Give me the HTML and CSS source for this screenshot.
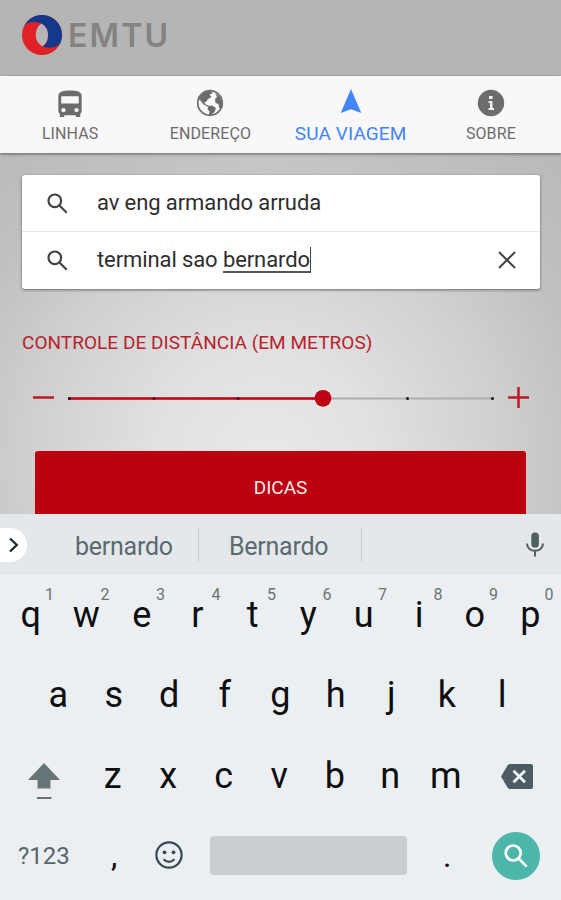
FILE: index.html
```html
<!DOCTYPE html>
<html lang="pt-BR">
<head>
  <meta charset="UTF-8">
  <meta name="viewport" content="width=device-width, initial-scale=1.0">
  <title>EMTU - Sua Viagem</title>
  <link rel="stylesheet" href="styles.css">
</head>
<body>
  <header class="header">
    <svg class="logo" viewBox="0 0 40 40">
      <circle cx="20" cy="20" r="20" fill="#e02127"/>
      <path d="M2.500 10.300A20 20 0 0 1 38 28.700C34 32.500 27 34 20.500 31.500C25.500 28.500 26 24 26 20C26 15 24 11.500 19.500 8.500C12 5.500 6 7 2.500 10.300Z" fill="#15388b"/>
      <path d="M19.500 8.500C24 11.500 26 15 26 20C26 25 24 29 20.500 31.500C16 28.500 13.800 25 13.800 20C13.800 15 15.500 11.500 19.500 8.500Z" fill="#b6b6b6"/>
    </svg>
    <span class="brand">EMTU</span>
  </header>

  <nav class="tabs">
    <a class="tab">
      <svg viewBox="0 0 24 24"><path d="M4 16c0 .88.39 1.670 1 2.220V20c0 .55.450 1 1 1h1c.55 0 1-.45 1-1v-1h8v1c0 .55.450 1 1 1h1c.55 0 1-.45 1-1v-1.780c.61-.55 1-1.340 1-2.220V6c0-3.500-3.580-4-8-4s-8 .5-8 4v10zm3.500 1c-.83 0-1.500-.67-1.500-1.500S6.670 14 7.500 14s1.500.67 1.500 1.500S8.330 17 7.500 17zm9 0c-.83 0-1.500-.67-1.500-1.500s.67-1.500 1.500-1.500 1.500.67 1.500 1.500-.67 1.500-1.500 1.500zm1.500-6H6V6h12v5z" transform="translate(-3 -1.300) scale(1.250)"/></svg>
      <span>LINHAS</span>
    </a>
    <a class="tab">
      <svg viewBox="0 0 28 28">
        <circle cx="14" cy="14" r="12.300" fill="none" stroke="currentColor" stroke-width="1.700"/>
        <path d="M4 7L8 3.500L14 2L17 4L13.500 5.500L15.500 8L12 10L10 13L8 13.500L10.500 16L13 16.500L12 18L7 15L4.500 11.500L3 11Z"/>
        <path d="M12.500 17L16 16.500L20 19L18.500 23L15 26H13L13.500 22.500L11.500 20Z"/>
        <path d="M19 4L24 8L26.500 14L25 20L23 18.500L22.500 15L19.500 14L19 10L21 8Z"/>
      </svg>
      <span>ENDEREÇO</span>
    </a>
    <a class="tab active">
      <svg viewBox="0 0 28 28"><path d="M14 0L24.300 24L14 20.200L3.700 24Z"/></svg>
      <span>SUA VIAGEM</span>
    </a>
    <a class="tab">
      <svg viewBox="0 0 28 28"><circle cx="14" cy="14" r="13.200"/><path d="M12 7h3.500v3H12zM11.500 12H15.500V19H17V21H11.500V19H13V14H11.500Z" fill="#f2f2f2"/></svg>
      <span>SOBRE</span>
    </a>
  </nav>

  <main class="content">
    <div class="search-card">
      <div class="search-row">
        <svg class="search-icon" viewBox="0 0 21 21"><circle cx="7.800" cy="7.800" r="6.300"/><path d="M12.500 12.500L19.700 19.700"/></svg>
        <span class="query">av eng armando arruda</span>
      </div>
      <div class="search-row">
        <svg class="search-icon" viewBox="0 0 21 21"><circle cx="7.800" cy="7.800" r="6.300"/><path d="M12.500 12.500L19.700 19.700"/></svg>
        <span class="query">terminal sao <span class="composing">bernardo</span></span>
        <span class="caret"></span>
        <svg class="clear-icon" viewBox="0 0 18 18"><path d="M1 1L17 17M17 1L1 17"/></svg>
      </div>
    </div>

    <h2 class="distance-title">CONTROLE DE DISTÂNCIA (EM METROS)</h2>

    <div class="slider">
      <svg class="step-icon" viewBox="0 0 21 21"><path d="M0 10.500H21"/></svg>
      <svg class="track" viewBox="0 0 426 18">
        <path d="M0 9.500H426" stroke="#adadad" stroke-width="2"/>
        <path d="M0 9.500H254" stroke="#bd0012" stroke-width="2.600"/>
        <g fill="#181818">
          <circle cx="1.500" cy="9.500" r="1.500"/>
          <circle cx="86" cy="9.500" r="1.300"/>
          <circle cx="170" cy="9.500" r="1.300"/>
          <circle cx="339.500" cy="9.500" r="1.500"/>
          <circle cx="424.500" cy="9.500" r="1.500"/>
        </g>
        <circle cx="255" cy="9.300" r="8.400" fill="#bd0012"/>
      </svg>
      <svg class="step-icon" viewBox="0 0 21 21"><path d="M0 10.500H21M10.500 0V21"/></svg>
    </div>

    <button class="tips" type="button">DICAS</button>
  </main>

  <section class="keyboard">
    <div class="suggestions">
      <span class="expand"><svg viewBox="0 0 10 16"><path d="M1 1.500L7.800 8L1 14.500"/></svg></span>
      <span class="word first">bernardo</span>
      <span class="word second">Bernardo</span>
      <svg class="mic" viewBox="0 0 18 25"><rect x="5.300" y="0.500" width="7.600" height="15" rx="3.600" fill="#506163"/><path d="M1 11.500C1 21.300 17 21.300 17 11.500M9 19V24.500" fill="none" stroke="#506163" stroke-width="2"/></svg>
    </div>

    <div class="keys row-1">
      <span class="key">q<sup>1</sup></span>
      <span class="key">w<sup>2</sup></span>
      <span class="key">e<sup>3</sup></span>
      <span class="key">r<sup>4</sup></span>
      <span class="key">t<sup>5</sup></span>
      <span class="key">y<sup>6</sup></span>
      <span class="key">u<sup>7</sup></span>
      <span class="key">i<sup>8</sup></span>
      <span class="key">o<sup>9</sup></span>
      <span class="key">p<sup>0</sup></span>
    </div>
    <div class="keys row-2">
      <span class="key">a</span>
      <span class="key">s</span>
      <span class="key">d</span>
      <span class="key">f</span>
      <span class="key">g</span>
      <span class="key">h</span>
      <span class="key">j</span>
      <span class="key">k</span>
      <span class="key">l</span>
    </div>
    <div class="keys row-3">
      <span class="key wide"><svg class="shift" viewBox="0 0 32 37"><path d="M16 0L32 17H22.500V25.500H9.500V17H0ZM9 34H23.500V36H9Z" fill="#677578"/></svg></span>
      <span class="key">z</span>
      <span class="key">x</span>
      <span class="key">c</span>
      <span class="key">v</span>
      <span class="key">b</span>
      <span class="key">n</span>
      <span class="key">m</span>
      <span class="key wide"><svg class="backspace" viewBox="0 0 32 25"><path d="M9 0H30Q32 0 32 2V23Q32 25 30 25H9Q7.500 25 6.500 23.500L0 12.500L6.500 1.500Q7.500 0 9 0Z" fill="#4d5c63"/><path d="M12.500 6.800L24 18.300M24 6.800L12.500 18.300" stroke="#f1f4f5" stroke-width="2.800"/></svg></span>
    </div>
    <div class="keys row-4">
      <span class="symbols">?123</span>
      <span class="comma">,</span>
      <svg class="smiley" viewBox="0 0 28 28"><circle cx="14" cy="14" r="12.600"/><path d="M8.500 18.200Q14 23.500 19.500 18.200"/><circle class="eye" cx="9.500" cy="11.300" r="1.900"/><circle class="eye" cx="18.500" cy="11.300" r="1.900"/></svg>
      <span class="space"></span>
      <span class="period">.</span>
      <span class="go"><svg viewBox="0 0 24 24"><circle cx="9.200" cy="9" r="7.500"/><path d="M14.600 14.500L22.700 22.600"/></svg></span>
    </div>
  </section>
</body>
</html>
```
FILE: styles.css
```css
* {
  box-sizing: border-box;
}

body {
  width: 561px;
  height: 900px;
  margin: 0;
  overflow: hidden;
  font-family: Roboto, "Liberation Sans", sans-serif;
}

svg {
  display: block;
  flex: none;
}

/* Header */
.header {
  display: flex;
  align-items: flex-start;
  height: 76px;
  padding: 15px 0 0 22px;
  background-color: #b5b5b5;
}

.logo {
  width: 40px;
  height: 40px;
}

.brand {
  margin-left: 6px;
  color: #838383;
  font-family: Inter, sans-serif;
  font-size: 32px;
  font-weight: 600;
  line-height: 41px;
  letter-spacing: 2.2px;
}

/* Tabs */
.tabs {
  display: grid;
  grid-template-columns: repeat(4, 1fr);
  position: relative;
  height: 77px;
  background-color: #f8f8f8;
  box-shadow: 0 1px 3px rgba(0, 0, 0, 0.5);
}

.tab {
  display: flex;
  flex-direction: column;
  align-items: center;
  padding-top: 13px;
  color: #6c6c6c;
  font-size: 16px;
  line-height: 26px;
  letter-spacing: 0.1px;
  white-space: nowrap;
}

.tab svg {
  width: 28px;
  height: 28px;
  margin-bottom: 4px;
  fill: currentColor;
}

.tab.active {
  color: #4285f4;
  font-size: 19px;
}

/* Search form */
.content {
  height: 361px;
  padding: 22px 21px 0 22px;
  overflow: hidden;
  background: radial-gradient(circle at 265px 310px, #e9e9e9 0, #e1e1e1 110px, #cfcfcf 240px, #c0c0c0 330px, #b8b8b8 440px);
}

.search-card {
  height: 114px;
  border-radius: 3px;
  background-color: #fff;
  box-shadow: 0 1px 3px rgba(0, 0, 0, 0.5);
}

.search-row {
  display: flex;
  align-items: center;
  height: 57px;
  padding: 0 24px 0 25px;
}

.search-row:first-child {
  height: 56px;
}

.search-row + .search-row {
  border-top: 1px solid #e6e6e6;
}

.search-icon {
  width: 21px;
  height: 21px;
  fill: none;
  stroke: #444;
  stroke-width: 2.2;
}

.query {
  margin-left: 29px;
  color: #2e2e2e;
  font-size: 22px;
  line-height: 26px;
  letter-spacing: -0.1px;
  white-space: nowrap;
}

.composing {
  display: inline-block;
  height: 26px;
  border-bottom: 2px solid #555;
}

.caret {
  width: 1px;
  height: 26px;
  background-color: #444;
}

.clear-icon {
  width: 18px;
  height: 18px;
  margin-left: auto;
  fill: none;
  stroke: #444;
  stroke-width: 2;
}

.distance-title {
  margin: 42px 0 0;
  color: #b7222d;
  font-size: 19px;
  font-weight: 400;
  line-height: 24px;
  letter-spacing: 0.04px;
  white-space: nowrap;
}

.slider {
  display: flex;
  align-items: center;
  height: 22px;
  margin: 32px 10px 0 11px;
}

.step-icon {
  width: 21px;
  height: 21px;
  margin-bottom: 2px;
  stroke: #bd1824;
  stroke-width: 2.5;
}

.track {
  width: 426px;
  height: 18px;
  margin: 0 14px;
}

.tips {
  display: block;
  width: 491px;
  height: 72px;
  margin: 42px 0 0 13px;
  padding: 0;
  border: none;
  border-radius: 3px;
  background-color: #bb0010;
  color: #fbe9ea;
  font-family: inherit;
  font-size: 19px;
}

/* Keyboard */
.keyboard {
  height: 386px;
  background-color: #eceff1;
}

.suggestions {
  display: flex;
  align-items: center;
  height: 61px;
  padding-right: 17px;
  background-color: #e5e8ea;
}

.expand {
  display: flex;
  align-items: center;
  width: 27px;
  height: 34px;
  padding-left: 9px;
  border-radius: 0 17px 17px 0;
  background-color: #fff;
}

.expand svg {
  width: 10px;
  height: 16px;
  fill: none;
  stroke: #1d2b36;
  stroke-width: 2.4;
}

.word {
  height: 34px;
  border-right: 1px solid #c5cbce;
  color: #5b6a70;
  font-size: 25px;
  line-height: 37px;
  letter-spacing: -0.25px;
}

.word.first {
  width: 172px;
  padding-left: 48px;
}

.word.second {
  width: 163px;
  padding-left: 30px;
}

.mic {
  width: 18px;
  height: 25px;
  margin-left: auto;
}

.keys {
  display: flex;
  height: 80px;
  padding: 0 3px;
}

.key {
  display: flex;
  align-items: center;
  justify-content: center;
  position: relative;
  width: 55.5px;
  color: #0c0e10;
  font-size: 36px;
  line-height: 80px;
}

.key sup {
  position: absolute;
  top: 10px;
  left: 42px;
  color: #697376;
  font-size: 16px;
  line-height: 20px;
}

.row-2 {
  padding: 0 30.5px;
}

.row-3 {
  height: 81px;
}

.key.wide {
  width: 83px;
}

.row-3 .key:first-child {
  margin-left: -1px;
}

.shift {
  width: 32px;
  height: 37px;
  margin-top: 12px;
}

.backspace {
  width: 32px;
  height: 25px;
  margin: 2px 0 0 3px;
}

.row-4 {
  align-items: center;
  padding: 0 21px 0 18px;
}

.symbols {
  width: 91px;
  color: #56666b;
  font-size: 24px;
}

.comma,
.period {
  color: #0c0e10;
  font-size: 32px;
  line-height: 40px;
}

.comma {
  width: 46px;
  padding: 0 0 2px 2px;
}

.smiley {
  width: 28px;
  height: 28px;
  margin-bottom: 3px;
  fill: none;
  stroke: #34484f;
  stroke-width: 2.2;
}

.smiley .eye {
  fill: #34484f;
  stroke: none;
}

.space {
  width: 197px;
  height: 39px;
  margin: 0 0 2px 27px;
  border-radius: 4px;
  background-color: #c8cdcf;
}

.period {
  margin-left: 36px;
}

.go {
  display: flex;
  align-items: center;
  justify-content: center;
  width: 48px;
  height: 48px;
  margin-left: auto;
  border-radius: 50%;
  background-color: #4db6aa;
}

.go svg {
  width: 24px;
  height: 24px;
  fill: none;
  stroke: #fff;
  stroke-width: 2.7;
}
```
